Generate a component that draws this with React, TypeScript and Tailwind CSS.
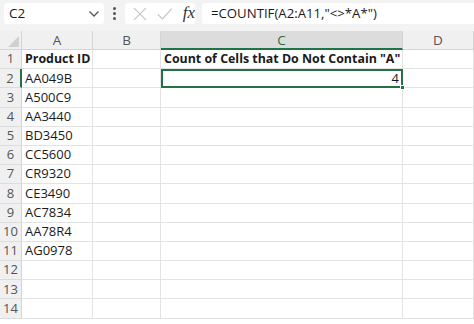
import React from 'react';

const font = { fontFamily: '"Open Sans", "Noto Sans", sans-serif' };

const products = ['AA049B', 'A500C9', 'AA3440', 'BD3450', 'CC5600', 'CR9320', 'CE3490', 'AC7834', 'AA78R4', 'AG0978'];

const cols = [
  { key: 'A', w: 'w-[71px]' },
  { key: 'B', w: 'w-[68px]' },
  { key: 'C', w: 'w-[242px]' },
  { key: 'D', w: 'w-[71px]' },
];

const Cell = ({ w, children, className = '' }: { w: string; children?: React.ReactNode; className?: string }) => (
  <div className={`${w} shrink-0 h-full border-r border-b border-[#e3e3e3] px-[3px] flex items-center overflow-visible whitespace-nowrap ${className}`}>
    {children}
  </div>
);

const App = () => {
  const rows: { n: number; a?: string; c?: string; bold?: boolean }[] = [];
  rows.push({ n: 1, a: 'Product ID', c: 'Count of Cells that Do Not Contain "A"', bold: true });
  products.forEach((p, i) => rows.push({ n: i + 2, a: p }));
  rows.push({ n: 12 }, { n: 13 }, { n: 14 });

  return (
    <div className="w-[474px] h-[324px] overflow-hidden bg-white text-[#1a1a1a] text-[13px]" style={font}>
      {/* formula bar */}
      <div className="h-[31px] bg-[#f3f3f3] flex items-start pt-[3px] pl-[4px]">
        <div className="w-[100px] h-[21px] bg-white rounded-[3px] flex items-center justify-between pl-[5px] pr-[4px] text-[13.5px]">
          <span>C2</span>
          <svg width="12" height="8" viewBox="0 0 12 8" className="mt-[1px]">
            <path d="M1.5 1.5 L6 6 L10.5 1.5" fill="none" stroke="#555" strokeWidth="1.3" />
          </svg>
        </div>
        <div className="w-[21px] h-[21px] flex flex-col items-center justify-center gap-[2px]">
          <span className="w-[3px] h-[3px] rounded-full bg-[#555]" />
          <span className="w-[3px] h-[3px] rounded-full bg-[#555]" />
          <span className="w-[3px] h-[3px] rounded-full bg-[#555]" />
        </div>
        <div className="w-[70px] h-[21px] bg-white rounded-[3px] flex items-center pl-[8px] gap-[10px]">
          <svg width="14" height="14" viewBox="0 0 14 14">
            <path d="M1 1 L13 13 M13 1 L1 13" stroke="#c4c4c4" strokeWidth="1.2" />
          </svg>
          <svg width="16" height="14" viewBox="0 0 16 14">
            <path d="M1 7.5 L5.5 12 L15 1.5" fill="none" stroke="#c4c4c4" strokeWidth="1.2" />
          </svg>
          <span className="text-[17px] italic leading-none text-[#333] -mt-[2px]" style={{ fontFamily: '"Liberation Serif", serif' }}>
            fx
          </span>
        </div>
        <div className="ml-[7px] flex-1 h-[21px] bg-white rounded-l-[3px] flex items-center pl-[9px] text-[13.2px] whitespace-nowrap">
          =COUNTIF(A2:A11,"&lt;&gt;*A*")
        </div>
      </div>

      {/* column headers */}
      <div className="flex h-[19px] bg-[#f0f0f0] text-[13.5px] text-[#555]">
        <div className="w-[22px] shrink-0 h-full border-r border-b border-[#d4d4d4] relative">
          <div className="absolute right-[2px] bottom-[2px] w-0 h-0 border-l-[11px] border-l-transparent border-b-[11px] border-b-[#d0d0d0]" />
        </div>
        {cols.map((c) => (
          <div
            key={c.key}
            className={`${c.w} shrink-0 h-full flex items-center justify-center border-r ${
              c.key === 'C' ? 'bg-[#dcdcdc] border-b-2 border-b-[#217346] border-r-[#d4d4d4]' : 'border-b border-[#d4d4d4]'
            }`}
          >
            <span className={c.key === 'C' ? 'text-[#1f6f43] mt-[1px]' : ''}>{c.key}</span>
          </div>
        ))}
      </div>

      {/* rows */}
      {rows.map((r) => (
        <div key={r.n} className="flex h-[19.2px]">
          <div
            className={`w-[22px] shrink-0 h-full flex items-center justify-center text-[#555] bg-[#f0f0f0] border-b border-[#dcdcdc] ${
              r.n === 2 ? 'border-r-2 border-r-[#217346] bg-[#dcdcdc] text-[#1f6f43]' : 'border-r border-r-[#d4d4d4]'
            }`}
          >
            {r.n}
          </div>
          <Cell w={cols[0].w} className={r.bold ? 'font-bold text-[12.4px]' : ''}>
            {r.a}
          </Cell>
          <Cell w={cols[1].w} />
          {r.n === 2 ? (
            <div className={`${cols[2].w} shrink-0 h-full relative border-2 border-[#217346] flex items-center justify-end pr-[2px]`}>
              4
              <div className="absolute -right-[4px] -bottom-[4px] w-[5px] h-[5px] bg-[#217346] border border-white" />
            </div>
          ) : (
            <Cell w={cols[2].w} className={r.bold ? 'font-bold text-[12.4px]' : ''}>
              {r.c}
            </Cell>
          )}
          <Cell w={cols[3].w} />
        </div>
      ))}
    </div>
  );
};

export default App;
